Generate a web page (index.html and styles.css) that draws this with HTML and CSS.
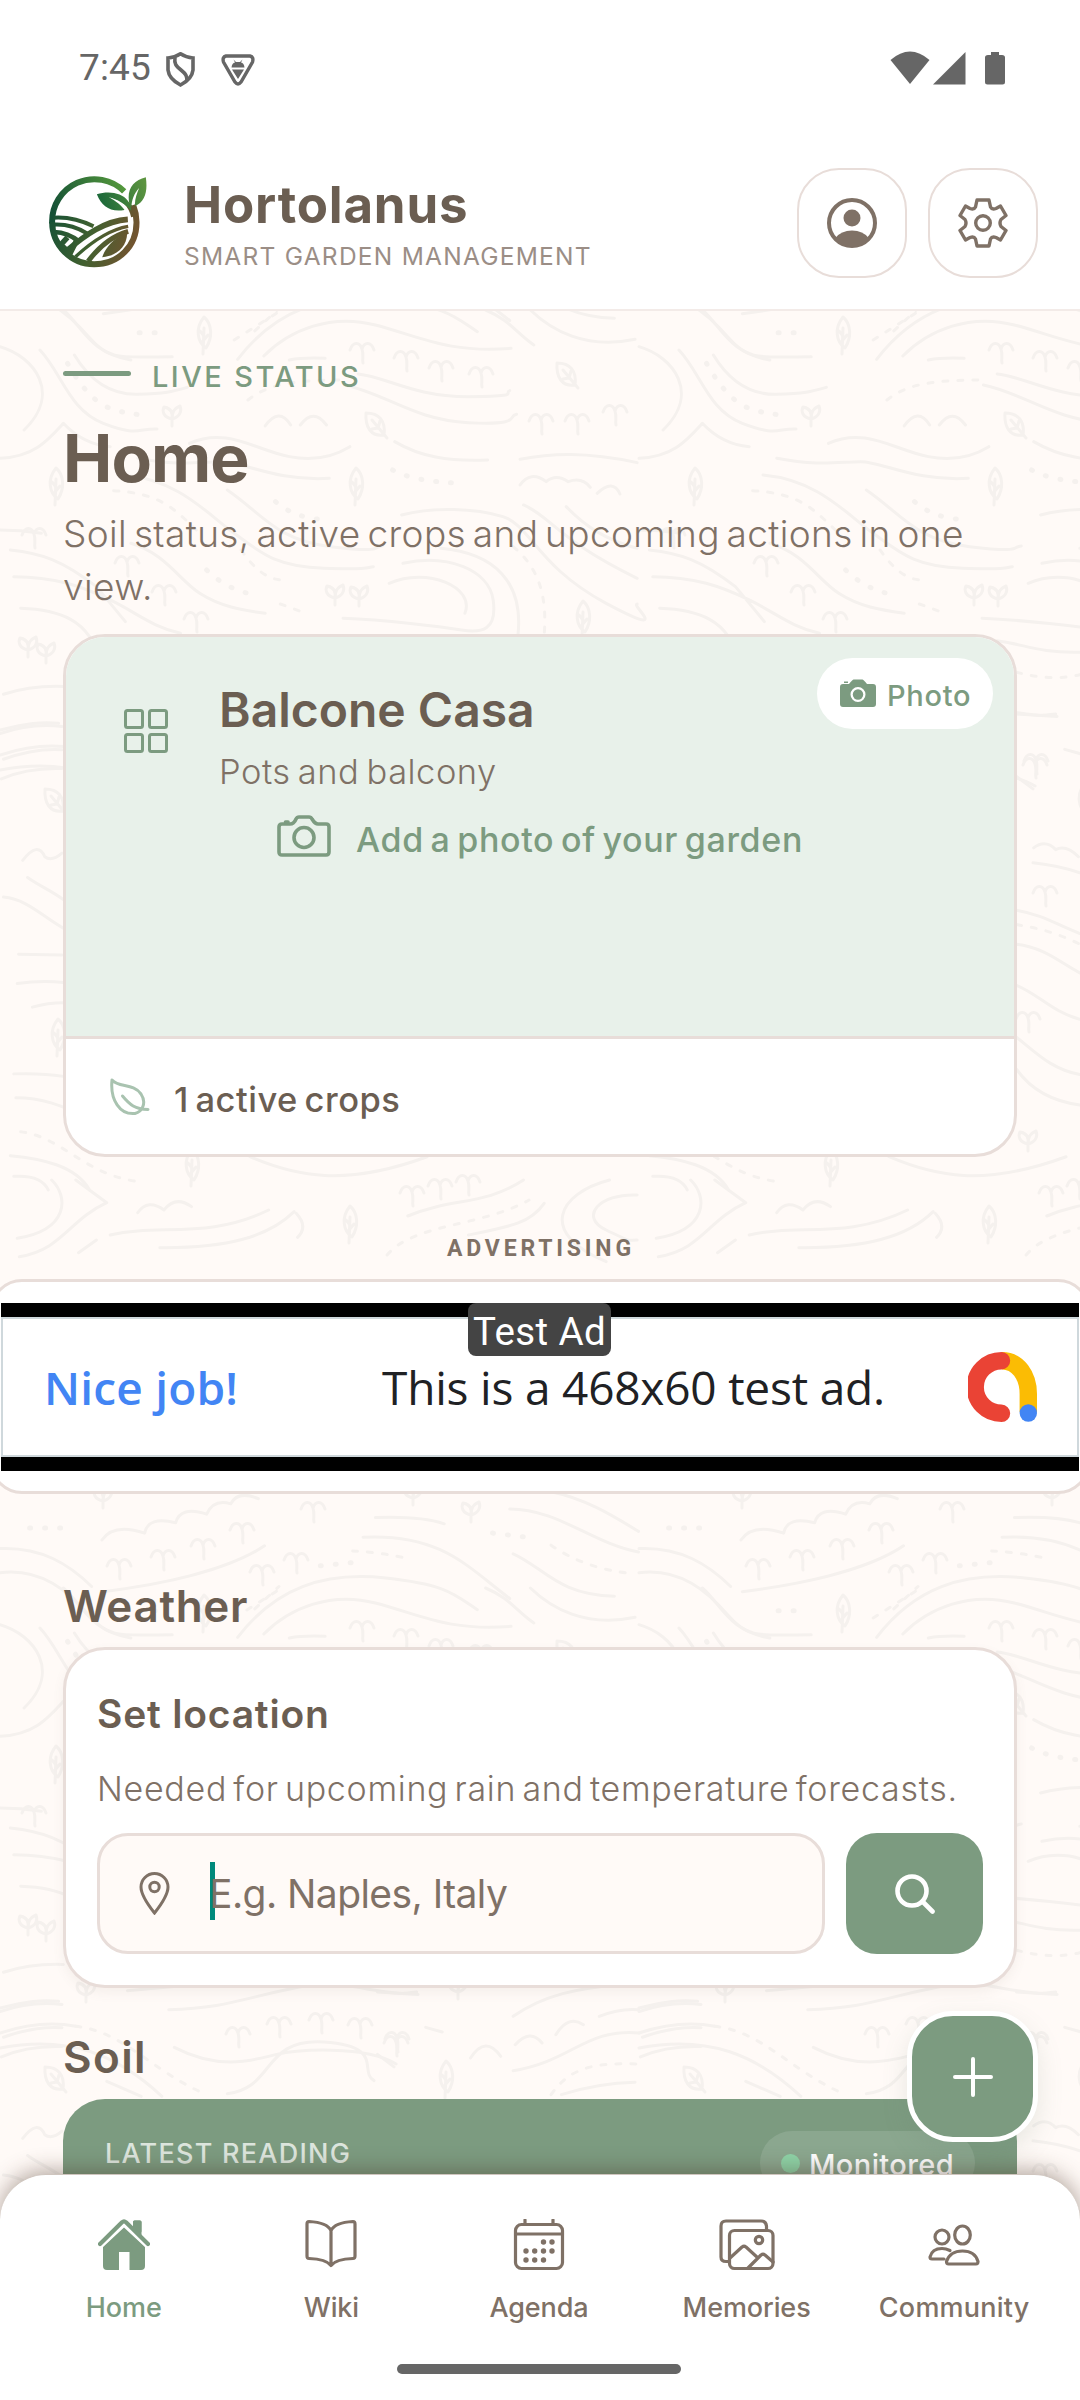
FILE: index.html
```html
<!DOCTYPE html>
<html lang="en">
<head>
<meta charset="utf-8">
<title>Hortolanus</title>
<link rel="stylesheet" href="styles.css">
</head>
<body>
<div class="app">
<svg class="backdrop" viewBox="0 0 1080 2400" aria-hidden="true">
  <defs>
    <g id="leaf"><path d="M0-17C8-10 9 3 2 14C-7 8-9-6 0-17ZM0-6L-1 20M-1 7L4 1M0 2L-4-3"/></g>
    <g id="leafr"><path d="M-10-12C3-12 10-4 8 10C-5 12-11 2-10-12ZM-4-5L11 13M2 3L4-4M2 3L-4 4"/></g>
    <g id="tree"><path d="M-12-1C-9-10-2-9 0-2C2-9 9-10 12-1M0-2C2 4 0 8 1 12"/></g>
    <g id="sprout"><path d="M0 4C-9 2-10-4-8-8C-2-7 1-3 0 4C0-4 3-7 8-9C10-4 8 2 0 4V11"/></g>
    <g id="tile">
      <g transform="translate(0 200) scale(.6888 .3444)">
        <path d="M148 180Q165 130 210 160Q215 110 255 130Q262 80 300 105Q310 60 335 75Q345 35 375 60M545 115Q610 110 645 133M527 172C640 160 680 260 740 350M740 90C810 90 860 190 927 215M800 40C850 60 890 110 927 155M745 220C790 260 810 340 892 343M0 205C60 200 100 250 133 315M0 275C60 260 100 330 130 400S180 455 250 455M150 330C230 310 330 270 384 197"/>
        <path class="dash" d="M512 212Q550 215 595 235M800 195Q850 265 920 278M370 380L405 315"/>
        <path class="dots" d="M43 145H90M465 255L510 246M715 160L765 172"/>
      </g>
      <g transform="translate(0 300) scale(.6888 .3333)">
        <path d="M92 30C120 80 130 160 190 180M0 140C50 170 90 280 35 390M58 150C90 220 100 330 150 370S200 385 228 387M108 165C130 240 160 285 200 283S250 275 272 262M345 178C400 30 470-20 560 0S660 50 693 95M383 168C420 90 480 40 545 75S650 160 742 145M705 30C740 60 750 100 775 135M770 30C800 90 850 150 922 118M420 180Q440 172 472 175M520 222C560 230 600 290 680 290S730 278 740 272M500 255C560 280 600 360 680 368S735 350 750 343M0 475C50 470 70 420 92 370C110 410 130 435 160 440M275 430C330 380 370 450 420 470S500 450 508 440M573 425C610 470 650 485 708 480M755 478C800 460 850 455 925 488M200 475C262 500 292 485 322 485S402 545 478 535M180 525C260 540 300 640 340 700S400 800 470 805S530 803 542 800M330 570C380 640 400 720 480 740S540 740 555 738M583 645C630 620 690 625 730 650S780 800 880 910S915 914 925 912M760 615C800 650 810 720 925 835M822 620C850 680 880 720 925 745M585 790C650 760 710 810 716 900S700 1000 670 990S560 960 498 955M640 745C720 760 760 850 752 1005M565 850C620 800 690 860 675 940M190 730C240 760 260 840 290 880S350 930 385 940M20 830C80 830 120 860 160 900S220 980 262 1000M15 750C60 760 90 780 140 860L182 965M30 925C100 930 120 980 130 1010M385 378Q405 320 422 375M436 375Q455 322 474 375M755 555Q770 510 793 545Q807 520 825 545Q845 530 857 562M867 580Q890 535 900 582M0 690Q30 690 60 700"/>
        <path class="dash" d="M340 120L405 35M360 300C390 250 430 240 500 240M165 572C230 580 250 620 285 690M745 740C780 800 795 880 790 1005M350 750C370 810 390 840 410 840M407 912L440 937"/>
        <path class="dots" d="M202 98H240M98 190C120 270 140 310 160 325S190 340 205 345M400 605C420 640 440 655 475 660M570 510Q600 545 670 550M300 810C320 850 340 870 360 880"/>
      </g>
      <g transform="translate(0 630) scale(.6888 .3571)">
        <path d="M5 180Q45 155 92 158M0 290Q45 260 90 270M5 362Q50 330 90 335M2 417Q40 385 90 388M40 693C60 720 75 730 92 755M5 748C40 755 60 800 92 835M27 908L90 910M25 990Q60 980 92 987M47 1056Q70 1044 92 1044M20 1243Q60 1240 92 1250M23 1310C60 1310 90 1330 130 1370M15 1472C60 1480 110 1500 130 1568M20 1530Q60 1525 70 1568M363 1475C430 1530 500 1560 620 1475M33 645Q55 590 65 635Q75 650 90 625M520 30C560 40 580 65 640 62M548 235L607 242M548 410L572 445M572 652Q610 660 640 680M548 785C590 800 600 820 640 850M548 880C590 890 610 930 640 960M548 995C580 1020 600 1070 640 1090M548 1140C580 1190 600 1230 640 1245M548 1230C570 1290 600 1320 640 1330M573 610Q590 585 605 615Q620 600 638 635"/>
        <path class="dash" d="M30 1405C90 1420 120 1520 195 1543M548 118Q600 145 640 125M548 825Q600 840 640 880"/>
      </g>
      <g transform="translate(0 1180) scale(.6888 .3333)">
        <path d="M25 175C100 150 100 50 75 0M28 230C90 210 100 120 155 68L110 0M200 98Q215 55 238 90Q255 45 278 80M160 165C230 130 300 180 390 90M232 203C330 205 390 170 427 95M430 100Q448 140 432 172M592 108C660 50 700 80 760 0M790 70C770 130 740 140 680 165M925 45C870 40 840 110 880 150S910 180 925 180M885 0C810 40 780 160 880 245M114 218L140 180"/>
        <path class="dash" d="M562 225C600 130 700 140 768 60"/>
      </g>
      <g transform="translate(0 700) scale(.6888 .3333)">
        <path d="M185 38C300 20 400-20 500 20S590 42 605 42M245 95C340 90 360 50 480 10M0 90C40 70 60 65 85 70M0 165Q60 125 110 145M0 210C100 170 170 230 235 355M155 310L205 355M253 208C320 280 370 245 400 230S530 200 575 258M330 347C400 330 380 180 470 192S520 280 543 308M618 148L642 162M683 240Q705 170 727 235M748 200Q770 150 787 195M807 170Q825 110 847 140M745 115C790 50 840 30 900 20M870 115Q900 90 927 95M745 278C830 250 850 150 928 165M815 350Q870 315 922 313"/>
        <path class="dash" d="M110 145C180 160 220 280 300 350M800 350C830 260 870 255 928 258"/>
      </g>
      <use href="#leaf" x="204" y="334"/><use href="#leafr" x="567" y="375"/><use href="#leafr" x="376" y="425"/><use href="#leaf" x="356" y="485"/><use href="#leaf" x="56" y="485"/><use href="#leaf" x="583" y="618"/><use href="#leafr" x="55" y="801"/><use href="#leaf" x="58" y="1036"/><use href="#leaf" x="192" y="1166"/><use href="#leaf" x="350" y="1223"/><use href="#leaf" x="446" y="800"/>
      <use href="#sprout" x="172" y="415"/><use href="#sprout" x="335" y="594"/><use href="#sprout" x="359" y="595"/><use href="#sprout" x="103" y="219"/><use href="#sprout" x="413" y="216"/><use href="#sprout" x="471" y="233"/><use href="#sprout" x="86" y="713"/><use href="#sprout" x="458" y="710"/><use href="#sprout" x="389" y="1140"/><use href="#sprout" x="28" y="646"/><use href="#sprout" x="46" y="652"/>
      <use href="#tree" x="362" y="351"/><use href="#tree" x="406" y="359"/><use href="#tree" x="441" y="369"/><use href="#tree" x="481" y="375"/><use href="#tree" x="541" y="422"/><use href="#tree" x="577" y="422"/><use href="#tree" x="615" y="413"/><use href="#tree" x="127" y="564"/><use href="#tree" x="164" y="593"/><use href="#tree" x="196" y="620"/><use href="#tree" x="34" y="536"/><use href="#tree" x="396" y="766"/><use href="#tree" x="406" y="894"/><use href="#tree" x="389" y="1020"/><use href="#tree" x="412" y="1194"/><use href="#tree" x="440" y="1187"/><use href="#tree" x="468" y="1183"/>
      <use href="#tree" x="313" y="232"/><use href="#tree" x="242" y="253"/><use href="#tree" x="203" y="269"/><use href="#tree" x="163" y="280"/><use href="#tree" x="119" y="289"/><use href="#tree" x="296" y="283"/><use href="#tree" x="262" y="295"/>
      <use href="#tree" x="238" y="757"/><use href="#tree" x="279" y="747"/><use href="#tree" x="321" y="743"/><use href="#tree" x="360" y="748"/><use href="#tree" x="397" y="762"/>
    </g>
  </defs>
  <use href="#tile"/><use href="#tile" x="639"/><use href="#tile" y="1278"/><use href="#tile" x="639" y="1278"/>
</svg>

<div class="status">
  <span class="clock">7:45</span>
  <svg class="shield" viewBox="0 0 29 35"><path d="M14.500 1.800Q20 5.500 27 6V18Q26 27 14.500 33Q3 27 2 18V6Q9 5.500 14.500 1.800Z"/><path d="M9 5C8 12 10 14 15 18S21 24 21 29"/></svg>
  <svg class="vpn" viewBox="0 0 34 32"><path class="edge" d="M5 2H29Q33 3 31.500 8L20 28Q17 32 14 28L2.500 8Q1 3 5 2Z"/><path class="fill" d="M10.500 13.500Q11 9 14 8.500L12.500 5.500L15 8H19L21.500 5.500L20 8.500Q23 9 23.500 13.500ZM11 15.500H23L17 25Z"/></svg>
  <svg class="signals" viewBox="0 0 115 34"><path d="M.5 9Q20 -8 39.500 9L20 33Z"/><path d="M43 33.500L75.500 1V33.500Z"/><path d="M101 1H109V4H112Q115 4 115 6.500V31Q115 33.500 112.500 33.500H97.500Q95 33.500 95 31V6.500Q95 4 98 4H101Z"/></svg>
</div>

<header class="topbar">
  <svg class="logo" viewBox="54 48 296 276">
    <defs><linearGradient id="lg" x1="60" y1="150" x2="330" y2="230" gradientUnits="userSpaceOnUse"><stop offset="0" stop-color="#155136"/><stop offset=".5" stop-color="#41602f"/><stop offset="1" stop-color="#765330"/></linearGradient>
    <linearGradient id="lt" x1="70" y1="150" x2="280" y2="60" gradientUnits="userSpaceOnUse"><stop offset="0" stop-color="#155136"/><stop offset="1" stop-color="#559a3c"/></linearGradient>
    <linearGradient id="lf" x1="210" y1="100" x2="340" y2="60" gradientUnits="userSpaceOnUse"><stop offset="0" stop-color="#1f6b3a"/><stop offset="1" stop-color="#5c9440"/></linearGradient></defs>
    <g fill="none" stroke-width="18">
      <path stroke="url(#lt)" d="M282 94A127 127 0 0 0 66 190"/>
      <path stroke="url(#lg)" d="M66 186A127 127 0 0 0 192 313C265 313 320 258 319 186C319 168 317 155 309 135"/>
      <g stroke="url(#lg)" stroke-width="12">
        <path d="M70 173C115 170 150 179 190 199"/><path d="M70 194C105 192 143 203 172 221"/><path d="M72 216C98 217 124 226 146 244" stroke-width="14"/>
        <path d="M293 178C225 182 165 225 110 272" stroke-width="17"/><path d="M294 199C240 208 185 245 136 290" stroke-width="10"/><path d="M294 214C245 228 205 262 174 304" stroke-width="15"/><path d="M112 232L92 254L120 280L140 240" stroke-width="16"/>
      </g>
      <path fill="url(#lg)" d="M291 220C250 232 225 265 216 292C262 287 290 260 291 220Z"/>
    </g>
    <path fill="url(#lg)" d="M238 112C275 118 296 138 303 172L318 168C316 140 290 115 262 110Z"/>
    <path fill="url(#lf)" d="M200 103C235 92 275 98 293 122C300 132 303 142 303 152C285 132 262 118 236 111C258 124 276 138 283 150C240 157 215 140 200 103ZM347 52C308 62 288 88 298 134L304 142C304 120 312 100 327 84C319 102 312 125 315 138C345 124 353 95 347 52Z"/>
  </svg>
  <div class="brand"><h1>Hortolanus</h1><p>SMART GARDEN MANAGEMENT</p></div>
  <button class="round" aria-label="Profile"><svg viewBox="0 0 50 50"><circle cx="25" cy="25" r="23" fill="none" stroke="currentColor" stroke-width="4"/><circle cx="25" cy="20" r="8.500"/><path d="M8.500 40Q14 32.500 25 32.500T41.500 40Q35 49 25 49T8.500 40Z"/></svg></button>
  <button class="round" aria-label="Settings"><svg viewBox="0 0 50 50" fill="none" stroke="currentColor" stroke-width="3.400" stroke-linejoin="round"><path d="M19 2H31L32.500 9Q34 12 38 10.500L42.500 8L48 17.500L43 21.500Q41 25 43 28.500L48 32.500L42.500 42L38 39.500Q34 38 32.500 41L31 48H19L17.500 41Q16 38 12 39.500L7.500 42L2 32.500L7 28.500Q9 25 7 21.500L2 17.500L7.500 8L12 10.500Q16 12 17.500 9Z"/><circle cx="25" cy="25" r="7.300"/></svg></button>
</header>

<main>
  <div class="live"><i></i><span>LIVE STATUS</span></div>
  <h2 class="page-title">Home</h2>
  <p class="intro">Soil status, active crops and upcoming actions in one<br>view.</p>

  <section class="garden">
    <div class="cover">
      <div class="garden-head">
        <svg class="grid" viewBox="0 0 44 44"><rect x="1.500" y="1.500" width="17" height="17" rx="2"/><rect x="25.500" y="1.500" width="17" height="17" rx="2"/><rect x="1.500" y="25.500" width="17" height="17" rx="2"/><rect x="25.500" y="25.500" width="17" height="17" rx="2"/></svg>
        <div><h3>Balcone Casa</h3><p>Pots and balcony</p></div>
      </div>
      <div class="add-photo">
        <svg viewBox="0 0 54 42"><path d="M2 12Q2 9 5 9H13Q17 9 19 4Q20 2 22 2H32Q34 2 35 4Q38 9 41 9H49Q52 9 52 12V37Q52 40 49 40H5Q2 40 2 37Z"/><path d="M8.500 7H11"/><circle cx="27" cy="22.500" r="10"/></svg>
        <span>Add a photo of your garden</span>
      </div>
      <div class="photo-pill"><svg viewBox="0 0 36 28"><path fill-rule="evenodd" d="M3 5H9Q12 1 13.500 .5H22.500Q24 1 27 5H33Q36 5 36 8V25Q36 28 33 28H3Q0 28 0 25V8Q0 5 3 5ZM18 8A7.500 7.500 0 1 0 18 23A7.500 7.500 0 1 0 18 8ZM4 4V2.500H8V4Z"/><circle cx="18" cy="15.500" r="5.200"/></svg><span>Photo</span></div>
    </div>
    <div class="crops">
      <svg viewBox="0 0 40 38"><path d="M2 2C9 10 23 5 31 16C37 25 32 34 25 35.500C10 37 0 22 2 2Z"/><path d="M12.500 18C20 27 25 31 38 31.500"/></svg>
      <span>1 active crops</span>
    </div>
  </section>

  <p class="ad-label">ADVERTISING</p>
  <section class="ad-card">
    <div class="ad">
      <div class="ad-inner">
        <span class="nice">Nice job!</span><span class="ad-text">This is a 468x60 test ad.</span>
        <svg class="admob" viewBox="0 0 69 70"><path d="M34 8.700C50 8.700 60.300 24 60.300 42V60" stroke="#fbbc04"/><path d="M33.500 8.700A26.300 26.300 0 1 0 33.500 61.300" stroke="#ea4335" stroke-linecap="round"/><circle cx="60.300" cy="61" r="8.700" fill="#4285f4"/></svg>
      </div>
      <span class="test-tag">Test Ad</span>
    </div>
  </section>

  <h2 class="section-title weather-title">Weather</h2>
  <section class="weather">
    <h3>Set location</h3>
    <p>Needed for upcoming rain and temperature forecasts.</p>
    <div class="search">
      <div class="field">
        <svg viewBox="0 0 31 43"><path d="M15.500 41Q2 24 2 15A13.500 13.500 0 0 1 29 15Q29 24 15.500 41Z"/><circle cx="15.500" cy="15" r="4.700"/></svg>
        <i class="caret"></i><span>E.g. Naples, Italy</span>
      </div>
      <button class="go" aria-label="Search"><svg viewBox="0 0 40 40"><circle cx="17" cy="17" r="14.500"/><path d="M27.500 27.500L37.500 37.500"/></svg></button>
    </div>
  </section>

  <h2 class="section-title soil-title">Soil</h2>
  <section class="soil">
    <span class="latest">LATEST READING</span>
    <span class="monitored"><i></i>Monitored</span>
  </section>
</main>

<button class="fab" aria-label="Add"><svg viewBox="0 0 40 40"><path d="M20 2V38M2 20H38"/></svg></button>

<nav>
  <div class="items">
    <a class="active"><svg viewBox="0 0 52 52"><path fill="currentColor" stroke="none" d="M5 28L26 8.500L47 28V47Q47 51 43 51H31.500V33H21V51H9Q5 51 5 47Z"/><path fill="currentColor" stroke="none" d="M35 3Q35 1.500 36.500 1.500H42Q43.500 1.500 43.500 3V17L35 9Z"/><path d="M2 25L24 3.300Q26 1.500 28 3.300L50 25" stroke="#fff" stroke-width="8"/><path d="M35 3Q35 1.500 36.500 1.500H42Q43.500 1.500 43.500 3V18L35 10Z" fill="currentColor" stroke="none"/><path d="M2 25L24 3.300Q26 1.500 28 3.300L50 25" stroke-width="4.200"/></svg><span>Home</span></a>
    <a><svg viewBox="0 0 52 52"><path d="M26 11.500Q22 3.500 4 2.500Q2 2.500 2 5V37Q2 39.500 4 39.500Q21 40 26 46.500Q31 40 48 39.500Q50 39.500 50 37V5Q50 2.500 48 2.500Q30 3.500 26 11.500V46"/></svg><span>Wiki</span></a>
    <a><svg viewBox="0 0 52 52"><rect x="2.500" y="5.500" width="47" height="44" rx="6"/><path d="M2.500 15H49.500M12 1V5M40 1V5"/><g fill="currentColor" stroke="none"><circle cx="30.500" cy="23" r="2.700"/><circle cx="39" cy="23" r="2.700"/><circle cx="13" cy="32" r="2.700"/><circle cx="21.700" cy="32" r="2.700"/><circle cx="30.500" cy="32" r="2.700"/><circle cx="39" cy="32" r="2.700"/><circle cx="13" cy="41" r="2.700"/><circle cx="21.700" cy="41" r="2.700"/><circle cx="30.500" cy="41" r="2.700"/></g></svg><span>Agenda</span></a>
    <a><svg class="wide" viewBox="0 0 56 52"><path d="M9.500 42.500H7Q2 42.500 2 38V7Q2 2 7 2H42Q47 2 47.500 7V10"/><rect x="10.500" y="11.500" width="43.500" height="38" rx="5"/><circle cx="40" cy="21" r="3.700"/><path d="M11 39L23 28Q25 26.500 27 28L39 39M29 49L42 36Q44 34.500 46 36L54 43"/></svg><span>Memories</span></a>
    <a><svg viewBox="0 0 52 52"><circle cx="14" cy="18" r="7"/><ellipse cx="34.500" cy="16" rx="7.800" ry="9"/><path d="M16 40H4Q2 40 2 38Q4 29.500 14 29.500Q18 29.500 22 31.500M20.500 45Q18.500 45 18.500 42.500Q22 32 34.500 32T50 42.500Q50 45 48 45Z"/></svg><span class="community">Community</span></a>
  </div>
  <i class="handle"></i>
</nav>
</div>
</body>
</html>
```
FILE: styles.css
```css
* { box-sizing: border-box; margin: 0; padding: 0; }
body { width: 1080px; height: 2400px; overflow: hidden; font-family: Inter, "Liberation Sans", sans-serif; color: #6b5e52; }
button { font: inherit; }
svg { display: block; flex: none; }
i { display: block; flex: none; }
.app { position: relative; width: 1080px; height: 2400px; overflow: hidden; background: #fffaf7; }
.backdrop { position: absolute; left: 0; top: 0; width: 1080px; height: 2400px; fill: none; stroke: #f5f1ee; stroke-width: 3; stroke-linecap: round; stroke-linejoin: round; }
.backdrop path { vector-effect: non-scaling-stroke; }
.backdrop .dash { stroke-dasharray: 5 10; }
.backdrop .dots { stroke-dasharray: 1 14; stroke-width: 5; }

.status { position: relative; height: 136px; padding: 0 75px 0 79px; display: flex; align-items: center; background: #fff; color: #666; }
.clock { font: 400 37px/44px Roboto, sans-serif; letter-spacing: .15px; width: 87px; }
.shield { width: 29px; height: 35px; margin-top: 3px; fill: none; stroke: #666; stroke-width: 3.6; }
.vpn { width: 34px; height: 32px; margin-left: 26px; margin-top: 3px; }
.vpn .edge { fill: none; stroke: #666; stroke-width: 3.4; }
.vpn .fill { fill: #666; }
.signals { width: 115px; height: 34px; margin-left: auto; fill: #666; }

.topbar { position: relative; height: 175px; padding: 0 42px 0 48px; display: flex; align-items: center; background: #fff; border-bottom: 2px solid #f3ebe8; }
.logo { width: 99px; height: 92px; margin-top: -2px; }
.brand { margin-left: 37px; margin-right: auto; }
.brand h1 { font-size: 51px; line-height: 60px; font-weight: 700; letter-spacing: .83px; }
.brand p { margin-top: 6px; font-size: 24.5px; line-height: 30px; letter-spacing: 1.25px; color: #9b8e86; }
.round { width: 110px; height: 110px; margin-left: 21px; display: grid; place-items: center; border: 2.6px solid #e8ddd9; border-radius: 42px; background: #fff; color: #7f7166; }
.round svg { width: 50px; height: 50px; fill: currentColor; }
.round svg[fill="none"] { fill: none; }

main { position: relative; padding: 46px 63px 0; display: flex; flex-direction: column; }
.live { display: flex; align-items: center; gap: 21px; height: 40px; }
.live i { width: 68px; height: 5px; margin-bottom: 7px; border-radius: 3px; background: #7c9b80; }
.live span { font-size: 29px; line-height: 40px; font-weight: 500; letter-spacing: 2.43px; color: #7c9b80; }
.page-title { margin-top: 21px; font-size: 66px; line-height: 80px; font-weight: 700; letter-spacing: -.9px; }
.intro { margin: 9px -40px 0 0; font-size: 37px; line-height: 53px; font-weight: 300; letter-spacing: .38px; word-spacing: -4px; color: #7f7166; }

.garden { width: 954px; height: 523px; margin-top: 21px; border: 3px solid #e8ddd9; border-radius: 42px; background: #fff; overflow: hidden; }
.cover { position: relative; height: 402px; padding-top: 44px; background: #e8f1ea; border-bottom: 3px solid #e8ddd9; }
.garden-head { display: flex; align-items: center; gap: 51px; padding-left: 58px; }
.grid { width: 44px; height: 44px; margin-top: -13px; fill: none; stroke: #7c9b80; stroke-width: 3; }
.garden-head h3 { font-size: 48px; line-height: 58px; font-weight: 600; }
.garden-head p { margin-top: 11px; font-size: 34.5px; line-height: 44px; font-weight: 300; letter-spacing: .49px; word-spacing: -3px; color: #7f7166; }
.add-photo { display: flex; justify-content: center; gap: 25px; margin-top: 25px; font-size: 34px; line-height: 42px; font-weight: 500; letter-spacing: .65px; word-spacing: -3px; color: #7c9b80; }
.add-photo svg { width: 54px; height: 42px; margin-top: -4px; fill: none; stroke: currentColor; stroke-width: 3.6; stroke-linecap: round; }
.photo-pill { position: absolute; right: 21px; top: 21px; width: 176px; height: 71px; padding: 4px 0 0 23px; display: flex; align-items: center; gap: 11px; border-radius: 36px; background: #fff; color: #7c9b80; font-size: 29px; font-weight: 500; letter-spacing: .7px; }
.photo-pill svg { width: 36px; height: 28px; margin-top: -5px; fill: currentColor; }
.crops { height: 115px; display: flex; align-items: center; padding: 6px 0 0 44px; gap: 24px; font-size: 34.5px; line-height: 44px; font-weight: 500; letter-spacing: .5px; word-spacing: -3px; }
.crops svg { width: 40px; height: 38px; margin-top: -6px; fill: none; stroke: #a9c3b0; stroke-width: 3; stroke-linecap: round; stroke-linejoin: round; }

.ad-label { margin-top: 77px; text-align: center; font: 700 23px/30px Roboto, sans-serif; letter-spacing: 3.8px; color: #7f7166; text-indent: 2px; }
.ad-card { margin: 15px -73px 0; height: 215px; padding: 21px 8px 0; border: 3px solid #e8ddd9; border-radius: 32px; background: #fff; }
.ad { position: relative; height: 168px; padding: 14px 0; background: #000; }
.ad-inner { height: 140px; display: flex; align-items: center; padding: 0 40px 0 41px; border: 2px solid #cfd8dc; background: #fff; font-family: "Open Sans", sans-serif; font-size: 46px; line-height: 60px; white-space: nowrap; }
.nice { width: 338px; font-weight: 600; letter-spacing: .2px; color: #4285f4; }
.ad-text { letter-spacing: -.2px; color: #202124; }
.admob { width: 69px; height: 70px; margin-left: auto; fill: none; stroke-width: 17.4; }
.admob circle { stroke: none; }
.test-tag { position: absolute; left: 467px; top: 0; width: 143px; height: 53px; padding-top: 5px; text-align: center; border-radius: 8px; background: #444; color: #fff; font: 400 38.5px/48px Roboto, sans-serif; letter-spacing: .39px; }

.section-title { font-size: 44px; line-height: 54px; font-weight: 600; }
.weather-title { margin-top: 85px; letter-spacing: .67px; }
.weather { height: 341px; margin-top: 14px; padding: 40px 31px 0; border: 3px solid #e8ddd9; border-radius: 42px; background: #fff; box-shadow: 0 5px 12px rgba(107, 94, 82, .07); }
.weather h3 { font-size: 39px; line-height: 48px; font-weight: 600; letter-spacing: .8px; }
.weather p { margin-top: 30px; font-size: 34px; line-height: 42px; font-weight: 300; letter-spacing: .7px; word-spacing: -4px; color: #7f7166; white-space: nowrap; }
.search { display: flex; gap: 21px; margin-top: 23px; height: 121px; }
.field { flex: 1; display: flex; align-items: center; padding-left: 39px; border: 3px solid #e8ddd9; border-radius: 31px; background: #fffaf7; font-size: 39px; line-height: 48px; letter-spacing: -.56px; color: #7f7166; }
.field svg { width: 31px; height: 43px; fill: none; stroke: #7f7166; stroke-width: 3; }
.field span { margin-left: -6px; }
.caret { width: 5px; height: 58px; margin-left: 40px; margin-top: -5px; background: #00897b; }
.go { width: 137px; display: grid; place-items: center; border: 0; border-radius: 31px; background: #7c9b80; }
.go svg { width: 40px; height: 40px; fill: none; stroke: #fff; stroke-width: 4.6; stroke-linecap: round; }

.soil-title { margin-top: 42px; letter-spacing: 1.4px; }
.soil { height: 200px; margin-top: 15px; padding: 32px 42px 0; display: flex; justify-content: space-between; align-items: flex-start; border-radius: 42px; background: #7c9b80; }
.latest { margin-top: 6px; font-size: 27px; line-height: 34px; font-weight: 500; letter-spacing: 1.25px; color: #dce5dd; }
.monitored { width: 215px; height: 64px; padding: 3px 0 0 21px; display: flex; align-items: center; gap: 9px; border-radius: 32px; background: rgba(255, 255, 255, .12); color: #fff; font-size: 29px; line-height: 61px; font-weight: 500; letter-spacing: .4px; }
.monitored i { width: 19px; height: 19px; margin-top: -3px; border-radius: 50%; background: #8ed3a7; }

.fab { position: absolute; left: 907px; top: 2011px; width: 131px; height: 131px; display: grid; place-items: center; border: 5px solid #fff; border-radius: 46px; background: #7c9b80; box-shadow: 0 10px 26px rgba(107, 130, 110, .16); }
.fab svg { width: 40px; height: 40px; fill: none; stroke: #fff; stroke-width: 4; stroke-linecap: round; }

nav { position: absolute; left: 0; bottom: 0; width: 1080px; height: 226px; padding: 0 22px 0 20px; border-top: 1px solid #cfc5be; border-radius: 46px 46px 0 0; background: #fff; box-shadow: 0 -3px 22px rgba(70, 45, 30, .42); }
.items { display: grid; grid-template-columns: repeat(5, 1fr); padding-top: 44px; color: #7f7166; }
.items a { display: flex; flex-direction: column; align-items: center; font-size: 27px; line-height: 34px; font-weight: 500; letter-spacing: -.1px; }
.items .active { color: #7c9b80; }
.items span { margin-top: 20px; }
.items .community { letter-spacing: .24px; }
.items svg { width: 52px; height: 52px; fill: none; stroke: currentColor; stroke-width: 3.2; stroke-linecap: round; stroke-linejoin: round; }
.items .wide { width: 56px; }
.handle { width: 284px; height: 10px; margin: 39px auto 0; border-radius: 5px; background: #666; }
```
